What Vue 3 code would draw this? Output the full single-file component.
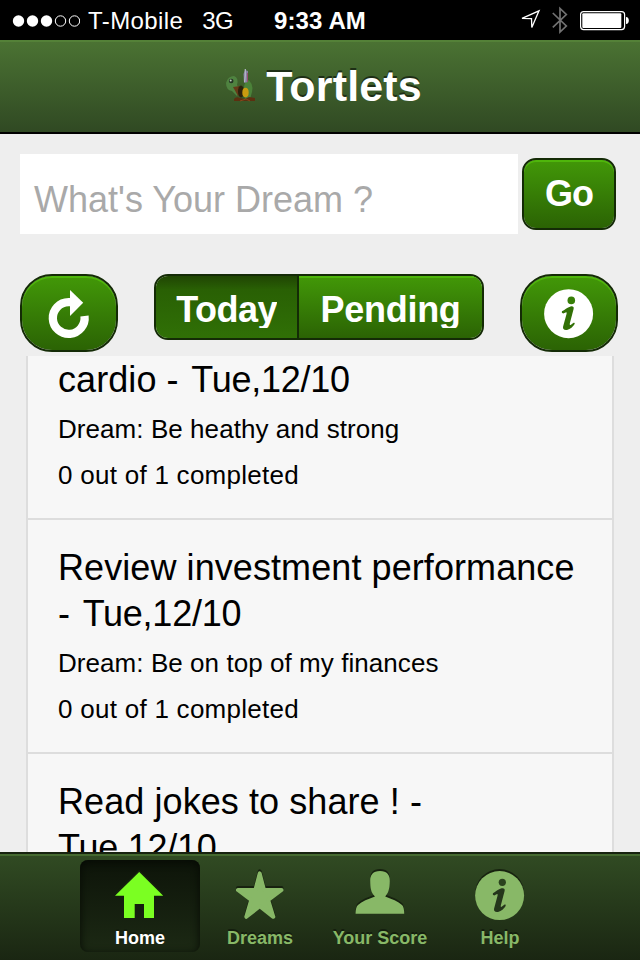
<script setup>
const tasks = [
  { title: [['cardio - ', 'Tue,12/10']], dream: 'Be heathy and strong', cut: true },
  { title: [['Review investment performance', ''], ['- ', 'Tue,12/10']], dream: 'Be on top of my finances' },
  { title: [['Read jokes to share ! -', ''], ['', 'Tue,12/10']], dream: '' },
]
const tabs = [
  { id: 'home', label: 'Home' },
  { id: 'dreams', label: 'Dreams' },
  { id: 'score', label: 'Your Score' },
  { id: 'help', label: 'Help' },
]
const infoPath =
  'M-6.7 -2.4C-4 -3.6 -1.5 -6.6 2 -7.3Q5.8 -7.8 5 -4.6L1.2 9.9Q0.9 12.2 2.4 11L5 9Q6.6 8.6 6 10.4C4.2 13.8 0.2 16.4 -2.6 16.4Q-6.2 16.2 -5.5 12.8L-2 0Q-1.7 -2 -3 -1.3L-5.4 -0.1Q-7.4 -0.6 -6.7 -2.4Z'
</script>

<template>
  <div class="screen">
    <div class="status">
      <div class="carrier">
        <svg class="dots" width="68" height="14" viewBox="0 0 68 14">
          <g fill="#fff">
            <circle cx="6.5" cy="7" r="5.7" /><circle cx="20.5" cy="7" r="5.7" /><circle cx="34.5" cy="7" r="5.7" />
          </g>
          <g fill="none" stroke="#fff">
            <circle cx="48.5" cy="7" r="5.2" /><circle cx="62.5" cy="7" r="5.2" />
          </g>
        </svg>
        <span class="op">T-Mobile</span>
        <span class="net">3G</span>
      </div>
      <div class="time">9:33 AM</div>
      <svg class="indicators" width="120" height="40" viewBox="520 0 120 40">
        <path d="M522 18.4L539 10.8L531.8 27.5L531.5 18.6Z" fill="none" stroke="#fff" stroke-width="1.3" />
        <path d="M552.8 13L566.3 26L560 32V8.5L566.3 14.5L552.8 27.3" fill="none" stroke="#727272" stroke-width="1.7" />
        <rect x="580.6" y="11.6" width="44" height="18" rx="3" fill="none" stroke="#fff" stroke-width="1.2" />
        <rect x="582.3" y="13.2" width="39" height="14.8" rx="1" fill="#fff" />
        <path d="M626 17C629.8 17 629.8 24 626 24Z" fill="#fff" />
      </svg>
    </div>

    <header class="bar">
      <svg class="turtle" width="32" height="38" viewBox="0 0 32 38">
        <path d="M23 14Q30 18 28 27L26 34H21Q18 26 21 18Z" fill="#4b8239" />
        <path d="M2 18Q4 11 10 11Q15 13 13 20L17 26L13 31L8 26Q2 25 2 18Z" fill="#4f8340" />
        <circle cx="7.2" cy="16" r="2.3" fill="#243424" /><circle cx="6.7" cy="15.6" r="1" fill="#b9c9b8" />
        <path d="M9 22L16 21L18 27L14 31Z" fill="#663a18" />
        <ellipse cx="17" cy="26.5" rx="3" ry="6" fill="#2b220d" />
        <ellipse cx="21.5" cy="27.5" rx="3.2" ry="4.8" fill="#c99c10" />
        <path d="M19.5 9L21 5L24 6L24 17L20 18Z" fill="#8784a0" />
        <path d="M21.3 4V10L20.6 17" fill="none" stroke="#b9b8cc" stroke-width="1.2" />
        <path d="M23.5 8V17" stroke="#96506c" />
        <path d="M10 34Q12 31 16 33L21 34L25 32L31 33V36H10Z" fill="#5c2f10" />
        <path d="M16 36L22 34L26 36" fill="none" stroke="#85481a" />
      </svg>
      <h1>Tortlets</h1>
    </header>

    <main>
      <div class="entry">
        <div class="field">What's Your Dream ?</div>
        <button class="btn go">Go</button>
      </div>
      <div class="tools">
        <button class="btn round">
          <svg width="94" height="74" viewBox="22 276 94 74">
            <path d="M70 302.1H68.6A15.9 15.9 0 1 0 84.5 316" fill="none" stroke="#fff" stroke-width="8.3" />
            <path d="M70 290L83.2 302.7L70 316Z" fill="#fff" />
          </svg>
        </button>
        <div class="segments">
          <button class="today"><span>Today</span></button>
          <button class="pending"><span>Pending</span></button>
        </div>
        <button class="btn round">
          <svg width="94" height="74" viewBox="522 276 94 74">
            <g transform="translate(568.6 313.7)">
              <circle r="24.5" fill="#fff" />
              <circle cx="2.7" cy="-13.3" r="3.8" fill="#377e07" />
              <path :d="infoPath" fill="#327006" />
            </g>
          </svg>
        </button>
      </div>
      <ul class="list">
        <li v-for="(task, i) in tasks" :key="i" :class="{ cut: task.cut }">
          <h2>
            <span v-for="(line, n) in task.title" :key="n" class="line">{{ line[0] }}<span
              v-if="line[1]" class="date" :class="{ after: line[0] }">{{ line[1] }}</span></span>
          </h2>
          <template v-if="task.dream">
            <p>Dream: {{ task.dream }}</p>
            <p class="count">0 out of 1 completed</p>
          </template>
        </li>
      </ul>
    </main>

    <nav class="tabbar">
      <div v-for="(tab, i) in tabs" :key="tab.id" class="tab" :class="{ active: i === 0 }">
        <svg class="icon" width="60" height="60" viewBox="0 0 60 60">
          <path v-if="tab.id === 'home'" d="M29.2 6L53.2 29.8H44V52H34V38H24.7V52H14V29.8H5Z" />
          <path
            v-else-if="tab.id === 'dreams'"
            stroke-width="4"
            stroke-linejoin="round"
            stroke="currentColor"
            d="M29.7 7.4L34 24H51.5L38.2 34L43.3 50.8L29.7 40.2L16.3 50.8L21.2 34L8 24H25.4Z"
          />
          <path
            v-else-if="tab.id === 'score'"
            d="M30 5C37 5 40 9 39.8 15C39.7 22 38.6 27 35.2 30.4C42 33 48 35 52 39Q54.2 41.2 54.2 47.8H5.6Q5.6 41.2 8 39C12 35 18 33 25 30.4C21 27 20.3 22 20.2 15C20 9 23 5 30 5Z"
          />
          <g v-else transform="translate(29.6 29.6)">
            <circle r="24.5" />
            <circle cx="2.7" cy="-13.3" r="3.6" fill="#2a421e" />
            <path :d="infoPath" fill="#24361b" />
          </g>
        </svg>
        <span class="label">{{ tab.label }}</span>
      </div>
    </nav>
  </div>
</template>

<style>
body { margin: 0; background: #eee; }
</style>

<style scoped>
.screen {
  width: 640px;
  height: 960px;
  display: flex;
  flex-direction: column;
  overflow: hidden;
  background: #eee;
  color: #000;
  font-family: "Liberation Sans", Helvetica, Arial, sans-serif;
}
.status {
  height: 40px;
  flex: none;
  display: grid;
  grid-template-columns: 1fr auto 1fr;
  align-items: center;
  background: #000;
  color: #fff;
  font-size: 24px;
}
.carrier { display: flex; align-items: center; padding-left: 12px; white-space: nowrap; }
.op { margin-left: 8px; padding-top: 2px; letter-spacing: 0.4px; }
.net { margin-left: 19px; padding-top: 2px; letter-spacing: -0.6px; }
.dots { margin-top: 1px; }
.time { padding-top: 2px; font-weight: bold; letter-spacing: 0.1px; }
.indicators { justify-self: end; }
.bar {
  box-sizing: border-box;
  height: 94px;
  flex: none;
  display: flex;
  justify-content: center;
  align-items: center;
  gap: 10px;
  padding-left: 6px;
  border-bottom: 2px solid #000;
  background: linear-gradient(#4b7333, #304923);
  box-shadow: inset 0 2px #548138;
}
.turtle { margin-top: -5px; filter: blur(0.7px); }
h1 {
  margin: 0;
  color: #fff;
  font-size: 43px;
  line-height: 50px;
  letter-spacing: 0.15px;
  text-shadow: 0 -2px #1e2f16;
}
main { flex: none; height: 718px; display: flex; flex-direction: column; overflow: hidden; }
.entry { display: flex; gap: 4px; padding: 20px 20px 0; height: 80px; }
.field {
  box-sizing: border-box;
  width: 498px;
  height: 80px;
  padding: 5px 14px 0;
  background: #fff;
  color: #a9a9a9;
  font-size: 36px;
  line-height: 82px;
}
button { font-family: inherit; font-size: 36px; font-weight: bold; color: #fff; margin: 0; }
.btn {
  box-sizing: border-box;
  display: flex;
  justify-content: center;
  align-items: center;
  padding: 0;
  border: 2px solid #142b06;
  background: linear-gradient(#429808, #2b6304) padding-box;
  box-shadow: inset 0 2px #4fb60b;
}
.go { width: 94px; height: 72px; margin-top: 4px; border-radius: 14px; line-height: 68px; letter-spacing: -1px; }
.tools { display: flex; justify-content: space-between; padding: 40px 22px 4px 20px; height: 78px; }
.round { width: 98px; height: 78px; border-radius: 32px; }
.segments {
  box-sizing: border-box;
  width: 330px;
  height: 66px;
  display: flex;
  overflow: hidden;
  border: 2px solid #142b06;
  border-radius: 14px;
}
.segments button {
  display: flex;
  justify-content: center;
  align-items: center;
  padding: 6px 0 0;
  border: 0;
  box-sizing: border-box;
}
.segments span { display: block; height: 36px; line-height: 36px; overflow: hidden; }
.segments .today {
  width: 144px;
  border-right: 2px solid #142b06;
  background: linear-gradient(#204503, #296004 22%, #307006);
  letter-spacing: -0.5px;
}
.segments .pending {
  width: 184px;
  background: linear-gradient(#429808, #2b6304);
  box-shadow: inset 0 2px #4fb60b;
  letter-spacing: -0.3px;
}
.list {
  box-sizing: border-box;
  flex: 1;
  min-height: 0;
  margin: 0 26px;
  padding: 0;
  overflow: hidden;
  list-style: none;
  background: #f7f7f7;
  border: solid #ddd;
  border-width: 0 2px;
}
li { padding: 25px 0 20px 30px; border-bottom: 2px solid #ddd; }
li.cut { padding-top: 1px; }
h2 { margin: 0 0 3px; font-size: 36px; font-weight: normal; line-height: 46px; }
.line { display: block; white-space: pre; letter-spacing: 0.08px; }
.date { letter-spacing: -0.25px; }
.after { margin-left: 2.5px; }
p { margin: 0; font-size: 26px; line-height: 46px; letter-spacing: 0.06px; }
.count { letter-spacing: 0.27px; }
.tabbar {
  box-sizing: border-box;
  height: 108px;
  flex: none;
  display: flex;
  justify-content: center;
  padding-top: 6px;
  border-top: 2px solid #17220f;
  background: linear-gradient(#314b23, #1a2612);
  box-shadow: inset 0 2px #456a30;
}
.tab {
  width: 120px;
  height: 92px;
  display: flex;
  flex-direction: column;
  align-items: center;
  border-radius: 8px;
  color: #88b867;
}
.active {
  color: #7bff22;
  background: linear-gradient(#0d1409, #1c2914);
  box-shadow: inset 0 2px 8px #060a04;
}
.icon { flex: none; margin-top: 6px; fill: currentColor; filter: drop-shadow(0 -1.5px 0 #17220f); }
.label {
  font-size: 18px;
  font-weight: bold;
  line-height: 24px;
  white-space: nowrap;
  text-shadow: 0 -2px #141e0e;
}
.active .label { color: #fff; }
</style>
